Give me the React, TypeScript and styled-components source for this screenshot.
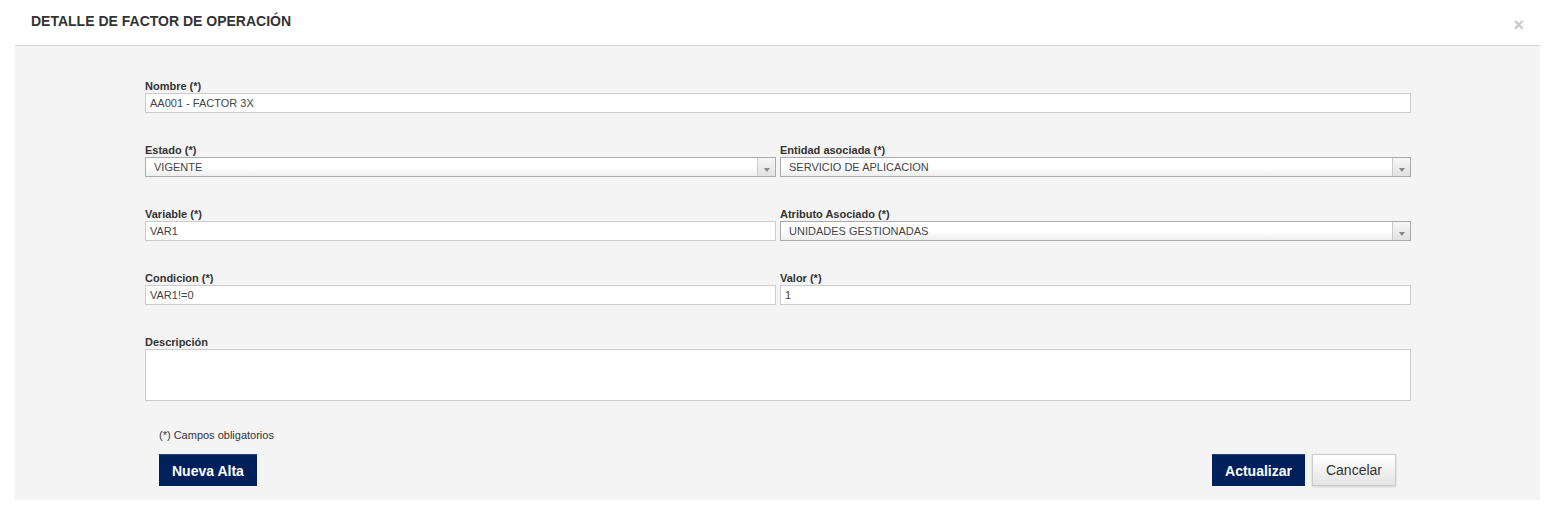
import React from 'react';
import styled, { createGlobalStyle } from 'styled-components';

const GlobalStyle = createGlobalStyle`
  body {
    margin: 0;
    background: #fff;
    font-family: 'Liberation Sans', Arial, sans-serif;
  }
`

const Modal = styled.div`
  width: 1525px;
  margin-left: 15px;
`

const Header = styled.div`
  display: flex;
  justify-content: space-between;
  align-items: center;
  height: 46px;
  padding: 0 16px 0 16px;
  border-bottom: 1px solid #d2d2d2;
  box-sizing: border-box;
`

const Title = styled.h4`
  margin: 0;
  font-size: 14px;
  font-weight: 700;
  color: #333;
  position: relative;
  top: -2px;
`

const Close = styled.span`
  font-size: 18px;
  font-weight: 700;
  color: #c8c8c8;
  line-height: 1;
  position: relative;
  top: 2px;
`

const Body = styled.div`
  background: #f4f4f4;
  padding: 34px 129px 14px 130px;
`

const Row = styled.div<{ $cols?: number }>`
  display: grid;
  grid-template-columns: ${p => (p.$cols === 2 ? '1fr 1fr' : '1fr')};
  column-gap: 4px;
  margin-bottom: 31px;
`

const Field = styled.div`
  display: flex;
  flex-direction: column;
`

const Label = styled.label`
  font-size: 11px;
  font-weight: 700;
  color: #333;
  line-height: 12px;
  margin-bottom: 1px;
`

const Input = styled.div`
  height: 20px;
  box-sizing: border-box;
  background: #fff;
  border: 1px solid #ccc;
  padding: 0 4px;
  font-size: 11px;
  line-height: 18px;
  color: #444;
`

const Select = styled.div`
  display: flex;
  height: 20px;
  box-sizing: border-box;
  border: 1px solid #aaa;
  background: linear-gradient(#fff 50%, #eee);
`

const SelectText = styled.span`
  flex: 1;
  padding-left: 8px;
  font-size: 11px;
  line-height: 18px;
  color: #444;
`

const Arrow = styled.span`
  width: 18px;
  border-left: 1px solid #ccc;
  background: linear-gradient(#f6f6f6, #e2e2e2);
  display: flex;
  justify-content: center;
  align-items: flex-end;
  padding-bottom: 4px;
  box-sizing: border-box;

  &::after {
    content: '';
    border-left: 3px solid transparent;
    border-right: 3px solid transparent;
    border-top: 4px solid #888;
  }
`

const TextArea = styled.div`
  height: 52px;
  box-sizing: border-box;
  background: #fff;
  border: 1px solid #ccc;
`

const Note = styled.p`
  margin: 28px 0 12px 14px;
  font-size: 11px;
  line-height: 13px;
  color: #333;
`

const Actions = styled.div`
  display: flex;
  justify-content: space-between;
  padding: 0 15px 0 14px;
`

const Group = styled.div`
  display: flex;
  gap: 7px;
`

const Button = styled.button<{ $primary?: boolean }>`
  height: 32px;
  padding: 0 13px;
  font-family: 'Liberation Sans', Arial, sans-serif;
  font-size: 14px;
  cursor: pointer;
  ${p =>
    p.$primary
      ? `
    background: #00205b;
    border: none;
    border-top: 1px solid #2a3f78;
    color: #fff;
    font-weight: 700;
  `
      : `
    background: linear-gradient(#fff, #e4e4e4);
    border: 1px solid #ccc;
    color: #333;
    font-weight: 400;
    box-shadow: 0 1px 2px rgba(0,0,0,0.15);
  `}
`

const SelectBox: React.FC<{ value: string }> = ({ value }) => (
  <Select>
    <SelectText>{value}</SelectText>
    <Arrow />
  </Select>
)

const App: React.FC = () => {
  return (
    <Modal>
      <GlobalStyle />
      <Header>
        <Title>DETALLE DE FACTOR DE OPERACIÓN</Title>
        <Close>×</Close>
      </Header>
      <Body>
        <Row>
          <Field>
            <Label>Nombre (*)</Label>
            <Input>AA001 - FACTOR 3X</Input>
          </Field>
        </Row>
        <Row $cols={2}>
          <Field>
            <Label>Estado (*)</Label>
            <SelectBox value='VIGENTE' />
          </Field>
          <Field>
            <Label>Entidad asociada (*)</Label>
            <SelectBox value='SERVICIO DE APLICACION' />
          </Field>
        </Row>
        <Row $cols={2}>
          <Field>
            <Label>Variable (*)</Label>
            <Input>VAR1</Input>
          </Field>
          <Field>
            <Label>Atributo Asociado (*)</Label>
            <SelectBox value='UNIDADES GESTIONADAS' />
          </Field>
        </Row>
        <Row $cols={2}>
          <Field>
            <Label>Condicion (*)</Label>
            <Input>VAR1!=0</Input>
          </Field>
          <Field>
            <Label>Valor (*)</Label>
            <Input>1</Input>
          </Field>
        </Row>
        <Field>
          <Label>Descripción</Label>
          <TextArea />
        </Field>
        <Note>(*) Campos obligatorios</Note>
        <Actions>
          <Button $primary>Nueva Alta</Button>
          <Group>
            <Button $primary>Actualizar</Button>
            <Button>Cancelar</Button>
          </Group>
        </Actions>
      </Body>
    </Modal>
  )
}

export default App;
